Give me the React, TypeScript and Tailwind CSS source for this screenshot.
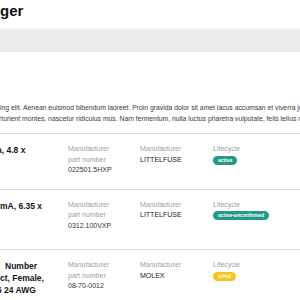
const rows = [
  {
    title: [{ text: "a, 4.8 x", cls: "-ml-[3px]" }],
    mpn: "022501.5HXP",
    manufacturer: "LITTELFUSE",
    lifecycle: "active",
    badge: "bg-[#23998a] text-white",
    pad: "pb-[13px]",
  },
  {
    title: [{ text: "mA, 6.35 x", cls: "" }],
    mpn: "0312.100VXP",
    manufacturer: "LITTELFUSE",
    lifecycle: "active-unconfirmed",
    badge: "bg-[#23998a] text-white",
    pad: "pb-[18px]",
  },
  {
    title: [
      { text: "Number", cls: "pl-[5px]" },
      { text: "ct, Female,", cls: "" },
      { text: "6 24 AWG", cls: "-ml-[3px]" },
    ],
    mpn: "08-70-0012",
    manufacturer: "MOLEX",
    lifecycle: "nrfnd",
    badge: "bg-[#f2c41c] text-white",
    pad: "pb-[13px]",
  },
];

function Label({ children }: { children: React.ReactNode }) {
  return <div className="text-[7px] leading-[10.5px] text-[#a0a0a0]">{children}</div>;
}

export default function App() {
  return (
    <div className="w-[300px] h-[300px] overflow-hidden bg-white font-['Liberation_Sans',Arial,sans-serif]">
      {/* Header */}
      <div className="pt-[2px] mb-[8px]">
        <h1 className="text-[15px] leading-[18px] font-bold text-[#111] whitespace-nowrap">ger</h1>
      </div>
      <div className="h-[24px] bg-[#ebebeb] border-t border-[#f4f4f4]" />

      {/* Description */}
      <div className="mt-[50px] text-[6.8px] leading-[11px] text-[#3a3a3a] whitespace-nowrap">
        <p>ing elit. Aenean euismod bibendum laoreet. Proin gravida dolor sit amet lacus accumsan et viverra justo commodo.</p>
        <p className="-ml-[1px]">rturient montes, nascetur ridiculus mus. Nam fermentum, nulla luctus pharetra vulputate, felis tellus mollis orci.</p>
      </div>

      {/* Parts list */}
      <div className="mt-[9px] border-t border-[#dcdcdc]">
        {rows.map((row) => (
          <div key={row.mpn} className={`flex items-start pt-[10px] ${row.pad} border-b border-[#dcdcdc]`}>
            <div className="w-[68px] shrink-0 text-[8.5px] leading-[12px] font-bold text-[#151515] whitespace-nowrap">
              {row.title.map((line) => (
                <div key={line.text} className={line.cls}>
                  {line.text}
                </div>
              ))}
            </div>
            <div className="w-[72px] shrink-0">
              <Label>Manufacturer</Label>
              <Label>part number</Label>
              <div className="text-[7px] leading-[10.5px] text-[#333]">{row.mpn}</div>
            </div>
            <div className="w-[73px] shrink-0">
              <Label>Manufacturer</Label>
              <div className="text-[7px] leading-[10.5px] text-[#222]">{row.manufacturer}</div>
            </div>
            <div className="flex-1 flex flex-col items-start">
              <Label>Lifecycle</Label>
              <span
                className={`mt-[1px] flex items-center h-[9px] px-[5px] rounded-full text-[5px] leading-[9px] font-bold ${row.badge}`}
              >
                {row.lifecycle}
              </span>
            </div>
          </div>
        ))}
      </div>
    </div>
  );
}
